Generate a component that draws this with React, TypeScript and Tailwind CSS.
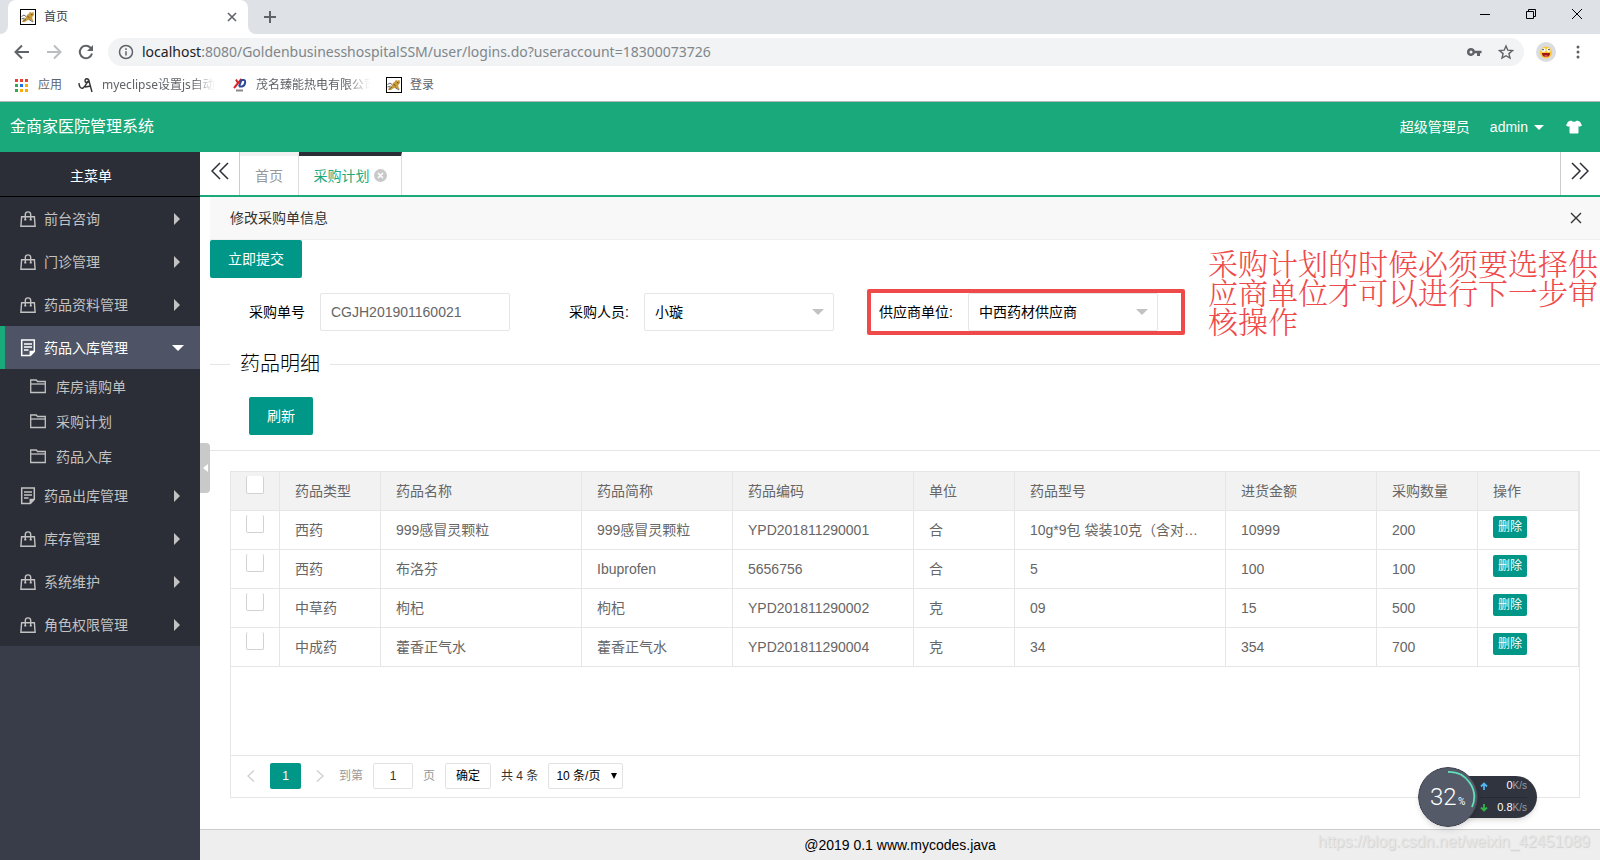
import { useState } from 'react';
import type { ReactNode } from 'react';

type MenuIcon = 'bag' | 'note';

interface MenuItem {
  name: string;
  icon: MenuIcon;
  children?: string[];
}

interface Drug {
  type: string;
  name: string;
  shortName: string;
  code: string;
  unit: string;
  model: string;
  price: string;
  count: string;
}

const menus: MenuItem[] = [
  { name: '前台咨询', icon: 'bag' },
  { name: '门诊管理', icon: 'bag' },
  { name: '药品资料管理', icon: 'bag' },
  { name: '药品入库管理', icon: 'note', children: ['库房请购单', '采购计划', '药品入库'] },
  { name: '药品出库管理', icon: 'note' },
  { name: '库存管理', icon: 'bag' },
  { name: '系统维护', icon: 'bag' },
  { name: '角色权限管理', icon: 'bag' },
];

const columns = ['药品类型', '药品名称', '药品简称', '药品编码', '单位', '药品型号', '进货金额', '采购数量', '操作'];

const drugs: Drug[] = [
  { type: '西药', name: '999感冒灵颗粒', shortName: '999感冒灵颗粒', code: 'YPD201811290001', unit: '合', model: '10g*9包 袋装10克（含对…', price: '10999', count: '200' },
  { type: '西药', name: '布洛芬', shortName: 'Ibuprofen', code: '5656756', unit: '合', model: '5', price: '100', count: '100' },
  { type: '中草药', name: '枸杞', shortName: '枸杞', code: 'YPD201811290002', unit: '克', model: '09', price: '15', count: '500' },
  { type: '中成药', name: '藿香正气水', shortName: '藿香正气水', code: 'YPD201811290004', unit: '克', model: '34', price: '354', count: '700' },
];

function CatIcon() {
  return (
    <svg className="h-4 w-4 shrink-0" viewBox="0 0 16 16">
      <rect x="0.5" y="0.5" width="15" height="15" fill="#fff" stroke="#000" />
      <path d="M2 13 3.500 10l2-1 1.500-3 2-1.500 1-2 1 1.200 2.500-.7.500 3-1.500 1.500-.3 2L14 13l-2.500-1.500-2-1-2.500 1L5 13Z" fill="#c79a3e" />
      <path d="M1.500 7.500 4 6l2 1.500M1.500 10l3-1M3 12.500l3-2.500M9 10.500l4 2.500" stroke="#5d6670" fill="none" />
      <path d="m7.500 7.500 2 1M11 5.500l1.500.3" stroke="#7b4b18" fill="none" />
    </svg>
  );
}

function BagIcon() {
  return (
    <svg className="h-4 w-4 shrink-0" viewBox="0 0 16 16" fill="none" stroke="currentColor" strokeWidth="1.400">
      <path d="M1.600 5.700h12.800l.7 9.500H.9Z" />
      <path d="M5.300 9V3.600a2.700 2.700 0 0 1 5.400 0V9" />
      <path d="M4.300 8.700h2M9.700 8.700h2" />
    </svg>
  );
}

function NoteIcon() {
  return (
    <svg className="h-[18px] w-4 shrink-0" viewBox="0 0 16 18" fill="none" stroke="currentColor" strokeWidth="1.500">
      <path d="M1.700 1h12.600v11.500l-4 4H1.700Z" />
      <path d="M14 12.500h-3.700v4" fill="currentColor" />
      <path d="M4 5h8M4 8h8M4 11h4.500" strokeWidth="1.300" />
    </svg>
  );
}

function FolderIcon() {
  return (
    <svg className="h-4 w-4 shrink-0" viewBox="0 0 16 16" fill="none" stroke="currentColor" strokeWidth="1.300">
      <path d="M.7 13.500V1h5.600l1.200 1.500h7.800v11Z" />
      <path d="M.7 5h14.600" />
    </svg>
  );
}

function Caret({ className }: { className: string }) {
  return (
    <svg className={className} viewBox="0 0 12 6" fill="currentColor">
      <path d="M0 0h12L6 6Z" />
    </svg>
  );
}

function BrowserBar() {
  return (
    <div className="shrink-0 border-b border-[#b5b7b9] bg-white font-['Noto_Sans','Noto_Sans_CJK_SC',sans-serif] text-xs text-[#5f6368]">
      <div className="flex h-[34px] items-stretch bg-[#dee1e6]">
        <svg className="h-2 w-2 shrink-0 self-end" viewBox="0 0 8 8"><path d="M8 0v8H0a8 8 0 0 0 8-8" fill="#fff" /></svg>
        <div className="flex w-60 items-center gap-2 rounded-t-lg bg-white pr-2.5 pl-3 text-[#3c4043]">
          <CatIcon />
          <span className="flex-1">首页</span>
          <button aria-label="关闭标签页">
            <svg className="h-3 w-3" viewBox="0 0 12 12" stroke="#5f6368" strokeWidth="1.600"><path d="m2 2 8 8M10 2l-8 8" /></svg>
          </button>
        </div>
        <svg className="h-2 w-2 shrink-0 self-end" viewBox="0 0 8 8"><path d="M0 0v8h8a8 8 0 0 1-8-8" fill="#fff" /></svg>
        <button aria-label="新标签页" className="ml-2">
          <svg className="h-3 w-3" viewBox="0 0 12 12" stroke="#5f6368" strokeWidth="2"><path d="M6 0v12M0 6h12" /></svg>
        </button>
        <div className="ml-auto flex items-center gap-9 pr-[18px] pb-1.5 text-black">
          <button aria-label="最小化"><svg className="h-2.5 w-2.5" viewBox="0 0 10 10" stroke="currentColor"><path d="M0 5.500h10" /></svg></button>
          <button aria-label="还原">
            <svg className="h-2.5 w-2.5" viewBox="0 0 10 10" stroke="currentColor" fill="none"><path d="M.5 2.500h7v7h-7ZM2.500 2.500v-2h7v7h-2" /></svg>
          </button>
          <button aria-label="关闭"><svg className="h-2.5 w-2.5" viewBox="0 0 10 10" stroke="currentColor"><path d="m0 0 10 10M10 0 0 10" /></svg></button>
        </div>
      </div>

      <div className="flex h-9 items-center px-3.5">
        <div className="flex w-[94px] shrink-0 items-center gap-4">
          <button aria-label="后退">
            <svg className="h-4 w-4" viewBox="0 0 16 16" fill="none" stroke="#5f6368" strokeWidth="2"><path d="M15 8H2M8 1.500 1.500 8 8 14.500" /></svg>
          </button>
          <button aria-label="前进">
            <svg className="h-4 w-4" viewBox="0 0 16 16" fill="none" stroke="#bbbdbf" strokeWidth="2"><path d="M1 8h13M8 1.500 14.500 8 8 14.500" /></svg>
          </button>
          <button aria-label="刷新页面">
            <svg className="h-4 w-4" viewBox="0 0 16 16" fill="none" stroke="#5f6368" strokeWidth="2">
              <path d="M14 9.500A6.200 6.200 0 1 1 12.500 3.700L14 5.300" />
              <path d="M15 1v6H9Z" fill="#5f6368" stroke="none" />
            </svg>
          </button>
        </div>
        <div className="flex h-7 flex-1 items-center rounded-full bg-[#f1f3f4] px-2.5">
          <svg className="mr-2 h-4 w-4" viewBox="0 0 16 16" fill="none" stroke="#5f6368" strokeWidth="1.500">
            <circle cx="8" cy="8" r="6.500" />
            <path d="M8 7.200v4.300M8 4.300v1.600" />
          </svg>
          <div className="flex-1 text-sm whitespace-nowrap text-[#80868b]">
            <span className="text-[#202124]">localhost</span>:8080/GoldenbusinesshospitalSSM/user/logins.do?useraccount=18300073726
          </div>
          <button aria-label="密码">
            <svg className="h-4 w-4" viewBox="0 0 16 16" fill="#5f6368">
              <path fillRule="evenodd" d="M5 4a4 4 0 1 0 3.800 5.200H11V12h3V9.200h1.500V6.800H8.800A4 4 0 0 0 5 4m0 2.500a1.500 1.500 0 1 1 0 3 1.500 1.500 0 0 1 0-3" />
            </svg>
          </button>
          <button aria-label="收藏" className="ml-4">
            <svg className="h-4 w-4" viewBox="0 0 16 16" fill="none" stroke="#5f6368" strokeWidth="1.400"><path d="m8 2 1.800 4.200 4.600.4-3.500 3 1.100 4.500L8 11.700l-4 2.400 1.100-4.500-3.500-3 4.600-.4Z" /></svg>
          </button>
        </div>
        <svg className="ml-3 h-5 w-5 shrink-0" viewBox="0 0 20 20">
          <circle cx="10" cy="10" r="10" fill="#dadce0" />
          <circle cx="10" cy="10.500" r="6" fill="#f8c93c" />
          <path d="M6 11h8a4 4 0 0 1-8 0" fill="#a31515" />
          <path d="M8 14q2-1.500 4 0-2 1.500-4 0" fill="#ff7a8a" />
          <circle cx="7.500" cy="8" r="2" fill="#fff" />
          <circle cx="12.500" cy="8" r="2" fill="#fff" />
          <circle cx="7" cy="7.600" r=".8" fill="#333" />
          <circle cx="13" cy="7.600" r=".8" fill="#333" />
        </svg>
        <button aria-label="菜单" className="ml-3.5">
          <svg className="h-4 w-4" viewBox="0 0 16 16" fill="#5f6368"><circle cx="8" cy="3" r="1.500" /><circle cx="8" cy="8" r="1.500" /><circle cx="8" cy="13" r="1.500" /></svg>
        </button>
      </div>

      <nav className="flex h-[31px] items-center pb-0.5 pl-3.5 whitespace-nowrap">
        <a href="#" className="flex items-center gap-2.5">
          <svg className="h-3.5 w-3.5" viewBox="0 0 14 14">
            <path d="M1 1h3v3H1zM6 1h3v3H6zM11 1h3v3h-3z" fill="#ea4335" />
            <path d="M1 6h3v3H1zM1 11h3v3H1z" fill="#34a853" />
            <path d="M6 6h3v3H6z" fill="#1a73e8" />
            <path d="M11 6h3v3h-3zM6 11h3v3H6zM11 11h3v3h-3z" fill="#fbac04" />
          </svg>
          应用
        </a>
        <a href="#" className="ml-4 flex w-36 items-center gap-2">
          <svg className="h-4 w-4 shrink-0" viewBox="0 0 16 16" fill="none" stroke="#333" strokeWidth="1.400">
            <path d="M1 6c0 4 2 6 4 5s3-4 5-7M14 15 11 4c-.5-3-4-3-4 0 0 2 3 2 4 0M7 10l6-1" />
          </svg>
          <span className="mask-r-from-80% mask-r-to-100%">myeclipse设置js自动</span>
        </a>
        <a href="#" className="ml-2.5 flex w-36 items-center gap-2">
          <svg className="h-4 w-4 shrink-0" viewBox="0 0 16 16" fill="none" strokeWidth="2">
            <path d="M4 2.500 6.500 7M9.500 2 2 11" stroke="#d7262b" />
            <path d="M7 9.500 9.500 3h2.500c2 0 1.500 6-2 6.500H7" stroke="#2c4a9a" />
            <path d="M4 13.500h7" stroke="#888" />
          </svg>
          <span className="mask-r-from-75% mask-r-to-95%">茂名臻能热电有限公司</span>
        </a>
        <a href="#" className="ml-2.5 flex items-center gap-2">
          <CatIcon />
          登录
        </a>
      </nav>
    </div>
  );
}

function Sidebar() {
  const [opened, setOpened] = useState('药品入库管理');

  return (
    <aside className="w-[200px] shrink-0 bg-[#393d49]">
      <div className="bg-[#2b2e37] text-[#c2c2c2]">
        <h2 className="flex h-[45px] items-center border-b border-black pt-[3px] pl-[70px] text-white">主菜单</h2>
        {menus.map((menu) => {
          const active = menu.name === opened;
          return (
            <div key={menu.name}>
              <button
                onClick={() => setOpened(active ? '' : menu.name)}
                className={`flex h-[43px] w-full items-center gap-2 border-l-[5px] pr-4 pl-[15px] text-left ${active ? 'border-[#1aa97b] bg-[#4e5465] text-white' : 'border-transparent'}`}
              >
                {menu.icon === 'bag' ? <BagIcon /> : <NoteIcon />}
                <span className="flex-1">{menu.name}</span>
                {active ? (
                  <Caret className="h-1.5 w-3" />
                ) : (
                  <svg className="mr-1 h-3 w-1.5" viewBox="0 0 6 12" fill="currentColor"><path d="M0 0v12l6-6Z" /></svg>
                )}
              </button>
              {active && menu.children && (
                <ul>
                  {menu.children.map((child) => (
                    <li key={child}>
                      <a href="#" className="flex h-[35px] items-center gap-2.5 pl-[30px]">
                        <FolderIcon />
                        {child}
                      </a>
                    </li>
                  ))}
                </ul>
              )}
            </div>
          );
        })}
      </div>
    </aside>
  );
}

function TabBar() {
  return (
    <div className="flex h-[45px] shrink-0 items-stretch border-b-2 border-[#1aa97b] bg-white">
      <button aria-label="向左" className="flex w-10 justify-center border-r border-[#ccc] pt-2.5 text-[#2b2e37]">
        <svg className="h-[18px] w-[18px]" viewBox="0 0 18 18" fill="none" stroke="currentColor" strokeWidth="1.500"><path d="M9 1 1 9l8 8M17 1 9 9l8 8" /></svg>
      </button>
      <a href="#" className="flex w-[59px] items-center justify-center border-t-4 border-r border-t-[#f1f1f1] border-r-[#ddd] text-[#999]">首页</a>
      <a href="#" className="flex w-[103px] items-center justify-center gap-1 border-t-4 border-r border-t-[#2b2e37] border-r-[#ddd] text-[#1aa97b]">
        采购计划
        <svg className="h-[13px] w-[13px]" viewBox="0 0 13 13"><circle cx="6.500" cy="6.500" r="6.500" fill="#c9c9c9" /><path d="m4 4 5 5M9 4 4 9" stroke="#fff" strokeWidth="1.500" /></svg>
      </a>
      <button aria-label="向右" className="ml-auto flex w-10 justify-center border-l border-[#ccc] pt-2.5 pr-0.5 text-[#2b2e37]">
        <svg className="h-[18px] w-[18px]" viewBox="0 0 18 18" fill="none" stroke="currentColor" strokeWidth="1.500"><path d="m1 1 8 8-8 8M9 1l8 8-8 8" /></svg>
      </button>
    </div>
  );
}

function FormItem({ id, label, children }: { id: string; label: string; children: ReactNode }) {
  return (
    <div className="relative flex items-center">
      <label htmlFor={id} className="w-[110px] pr-[15px] text-right text-black">{label}</label>
      {children}
    </div>
  );
}

function FormSelect({ id, value }: { id: string; value: string }) {
  return (
    <div className="relative">
      <select id={id} className="h-[38px] w-[190px] appearance-none rounded-xs border border-[#e6e6e6] bg-white pl-2.5 text-black">
        <option>{value}</option>
      </select>
      <Caret className="pointer-events-none absolute top-4 right-2.5 h-1.5 w-3 text-[#c2c2c2]" />
    </div>
  );
}

function DrugTable() {
  const checkbox = 'block h-[18px] w-[18px] appearance-none rounded-xs border border-t-0 border-[#d2d2d2] bg-white checked:bg-[#009688]';
  const cell = 'h-[39px] truncate border-r border-b border-[#e6e6e6] px-[15px] text-left font-normal';

  return (
    <table className="w-full table-fixed border-separate border-spacing-0">
      <colgroup>
        <col className="w-[49px]" />
        <col className="w-[101px]" />
        <col className="w-[201px]" />
        <col className="w-[151px]" />
        <col className="w-[181px]" />
        <col className="w-[101px]" />
        <col className="w-[211px]" />
        <col className="w-[151px]" />
        <col className="w-[101px]" />
        <col />
      </colgroup>
      <thead className="bg-[#f2f2f2]">
        <tr>
          <th className={`${cell} pt-1 align-top`}><input type="checkbox" aria-label="全选" className={checkbox} /></th>
          {columns.map((title) => <th key={title} className={cell}>{title}</th>)}
        </tr>
      </thead>
      <tbody>
        {drugs.map((drug) => (
          <tr key={drug.code}>
            <td className={`${cell} pt-1 align-top`}><input type="checkbox" aria-label={drug.name} className={checkbox} /></td>
            <td className={cell}>{drug.type}</td>
            <td className={cell}>{drug.name}</td>
            <td className={cell}>{drug.shortName}</td>
            <td className={cell}>{drug.code}</td>
            <td className={cell}>{drug.unit}</td>
            <td className={cell}>{drug.model}</td>
            <td className={cell}>{drug.price}</td>
            <td className={cell}>{drug.count}</td>
            <td className={`${cell} pt-[5px] align-top`}>
              <button className="block h-[22px] rounded-xs bg-[#009688] px-[5px] text-xs text-white">删除</button>
            </td>
          </tr>
        ))}
      </tbody>
    </table>
  );
}

function Pagination() {
  return (
    <div className="flex h-[42px] items-center gap-[11px] border-t border-[#e6e6e6] pb-0.5 pl-3 text-xs text-[#333]">
      <button aria-label="上一页" className="flex w-4 justify-center text-[#d2d2d2]">
        <svg className="h-3 w-2" viewBox="0 0 8 12" fill="none" stroke="currentColor" strokeWidth="1.500"><path d="M7 .5 1 6l6 5.500" /></svg>
      </button>
      <button className="h-[26px] w-[31px] rounded-xs bg-[#009688] text-white">1</button>
      <button aria-label="下一页" className="flex w-4 justify-center text-[#d2d2d2]">
        <svg className="h-3 w-2" viewBox="0 0 8 12" fill="none" stroke="currentColor" strokeWidth="1.500"><path d="m1 .5 6 5.500-6 5.500" /></svg>
      </button>
      <div className="flex items-center gap-2.5">
        <label htmlFor="page" className="text-[#999]">到第</label>
        <input id="page" defaultValue="1" className="h-[26px] w-10 rounded-xs border border-[#e2e2e2] text-center" />
        <span className="text-[#999]">页</span>
        <button className="h-[26px] w-[46px] rounded-xs border border-[#e2e2e2] text-black">确定</button>
        <span>共 4 条</span>
        <div className="relative">
          <select aria-label="每页条数" className="h-[26px] w-[75px] appearance-none rounded-xs border border-[#e2e2e2] pl-[7px] text-black">
            <option>10 条/页</option>
          </select>
          <svg className="pointer-events-none absolute top-2.5 right-1.5 h-1.5 w-1.5 text-black" viewBox="0 0 6 6" fill="currentColor"><path d="M0 0h6L3 6Z" /></svg>
        </div>
      </div>
    </div>
  );
}

function SpeedBall() {
  return (
    <div className="absolute right-[63px] bottom-[33px] flex items-center">
      <svg className="z-10 h-[60px] w-[60px] rounded-full shadow-md" viewBox="0 0 60 60">
        <circle cx="30" cy="30" r="29.500" fill="#555a69" stroke="#3b3f4a" />
        <path d="M30 5a25 25 0 0 1 24 35" fill="none" stroke="#5fe0b8" strokeWidth="1.800" />
        <text x="12" y="38" fontSize="24" fill="#fff" className="font-['Roboto',sans-serif] font-light">32</text>
        <text x="40" y="38" fontSize="10" fill="#fff" className="font-['Roboto',sans-serif]">%</text>
      </svg>
      <div className="-ml-4 flex h-[42px] w-[75px] flex-col rounded-r-full bg-[#30343f] pr-2.5 pl-[18px] text-[11px] text-white shadow-md">
        <div className="flex flex-1 items-center border-b border-[#272a33]">
          <svg className="h-2 w-2 shrink-0" viewBox="0 0 8 8" fill="none" stroke="#4fb4f0" strokeWidth="1.800"><path d="M4 8V1.500M1 4.500l3-3 3 3" /></svg>
          <span className="ml-auto">0</span>
          <span className="text-[10px] text-[#9a9da6]">K/s</span>
        </div>
        <div className="flex flex-1 items-center">
          <svg className="h-2 w-2 shrink-0" viewBox="0 0 8 8" fill="none" stroke="#35b34a" strokeWidth="1.800"><path d="M4 0v6.500M1 3.500l3 3 3-3" /></svg>
          <span className="ml-auto">0.8</span>
          <span className="text-[10px] text-[#9a9da6]">K/s</span>
        </div>
      </div>
    </div>
  );
}

function App() {
  return (
    <div className="relative flex min-h-screen flex-col bg-white font-['Liberation_Sans','Noto_Sans_CJK_SC',sans-serif] text-sm text-[#666]">
      <BrowserBar />

      <header className="flex h-[50px] shrink-0 items-center bg-[#1aa97b] px-2.5 text-white">
        <h1 className="text-base">金商家医院管理系统</h1>
        <span className="ml-auto">超级管理员</span>
        <button className="ml-5 flex items-center gap-1.5">
          admin
          <Caret className="h-[5px] w-2.5" />
        </button>
        <button aria-label="皮肤" className="mr-2 ml-[22px]">
          <svg className="h-4 w-4" viewBox="0 0 16 16" fill="currentColor"><path d="M5 1.500q3 2.500 6 0l3 1.200L16 6.500l-2.500 1.300-1-.8v6.500a1 1 0 0 1-1 1h-7a1 1 0 0 1-1-1V7l-1 .8L0 6.500l2-3.800Z" /></svg>
        </button>
      </header>

      <div className="flex flex-1">
        <Sidebar />

        <main className="flex min-w-0 flex-1 flex-col">
          <TabBar />

          <div className="flex flex-1">
            <button aria-label="收起菜单" className="mt-[246px] flex h-[50px] w-2.5 shrink-0 items-center justify-center rounded-r-sm bg-[#c9c9c9] text-white">
              <svg className="h-2 w-[5px]" viewBox="0 0 5 8" fill="currentColor"><path d="M5 0v8L0 4Z" /></svg>
            </button>

            <div className="flex min-w-0 flex-1 flex-col">
              <div className="flex h-[43px] items-center justify-between border-b border-[#eee] bg-[#f8f8f8] pr-[18px] pl-5 text-[#333]">
                <h2>修改采购单信息</h2>
                <button aria-label="关闭">
                  <svg className="h-3 w-3" viewBox="0 0 12 12" stroke="#333" strokeWidth="1.400"><path d="m1 1 10 10M11 1 1 11" /></svg>
                </button>
              </div>

              <form className="relative">
                <button type="button" className="block h-[38px] rounded-xs bg-[#009688] px-[18px] text-white">立即提交</button>
                <div className="mt-[15px] flex gap-6">
                  <FormItem id="orderNo" label="采购单号">
                    <input id="orderNo" defaultValue="CGJH201901160021" className="h-[38px] w-[190px] rounded-xs border border-[#e6e6e6] pl-2.5" />
                  </FormItem>
                  <FormItem id="buyer" label="采购人员:">
                    <FormSelect id="buyer" value="小璇" />
                  </FormItem>
                  <FormItem id="supplier" label="供应商单位:">
                    <FormSelect id="supplier" value="中西药材供应商" />
                    <span className="pointer-events-none absolute -top-1 -right-[27px] -bottom-1 left-[9px] rounded-xs border-4 border-[#ef4a4a]" />
                  </FormItem>
                </div>
                <p className="absolute top-2 right-0.5 w-[390px] font-['KaiTi','Noto_Serif_CJK_SC','Noto_Sans_CJK_SC',serif] text-[30px] leading-[29px] font-light text-[#ef4a4a]">
                  采购计划的时候必须要选择供应商单位才可以进行下一步审核操作
                </p>
              </form>

              <fieldset className="mt-[18px] border-t border-[#e6e6e6]">
                <legend className="ml-5 px-2.5 text-xl leading-[30px] font-light text-black">药品明细</legend>
                <button type="button" className="mt-[18px] ml-[39px] block h-[38px] rounded-xs bg-[#009688] px-[18px] text-white">刷新</button>
              </fieldset>

              <div className="mt-[15px] flex flex-1 flex-col border-t border-[#e6e6e6] px-5 pt-5 pb-[31px]">
                <div className="flex flex-1 flex-col border border-[#e6e6e6]">
                  <div className="flex-1">
                    <DrugTable />
                  </div>
                  <Pagination />
                </div>
              </div>
            </div>
          </div>

          <footer className="flex h-[31px] shrink-0 items-center justify-center border-t border-[#ccc] bg-[#eee] text-black">
            @2019 0.1 www.mycodes.java
          </footer>
        </main>
      </div>

      <SpeedBall />
      <span className="absolute right-2.5 bottom-2 text-base leading-5 text-[#e6e6e6] [text-shadow:1px_1px_1px_#d0d0d0]">https://blog.csdn.net/weixin_42451089</span>
    </div>
  );
}

export default App;
